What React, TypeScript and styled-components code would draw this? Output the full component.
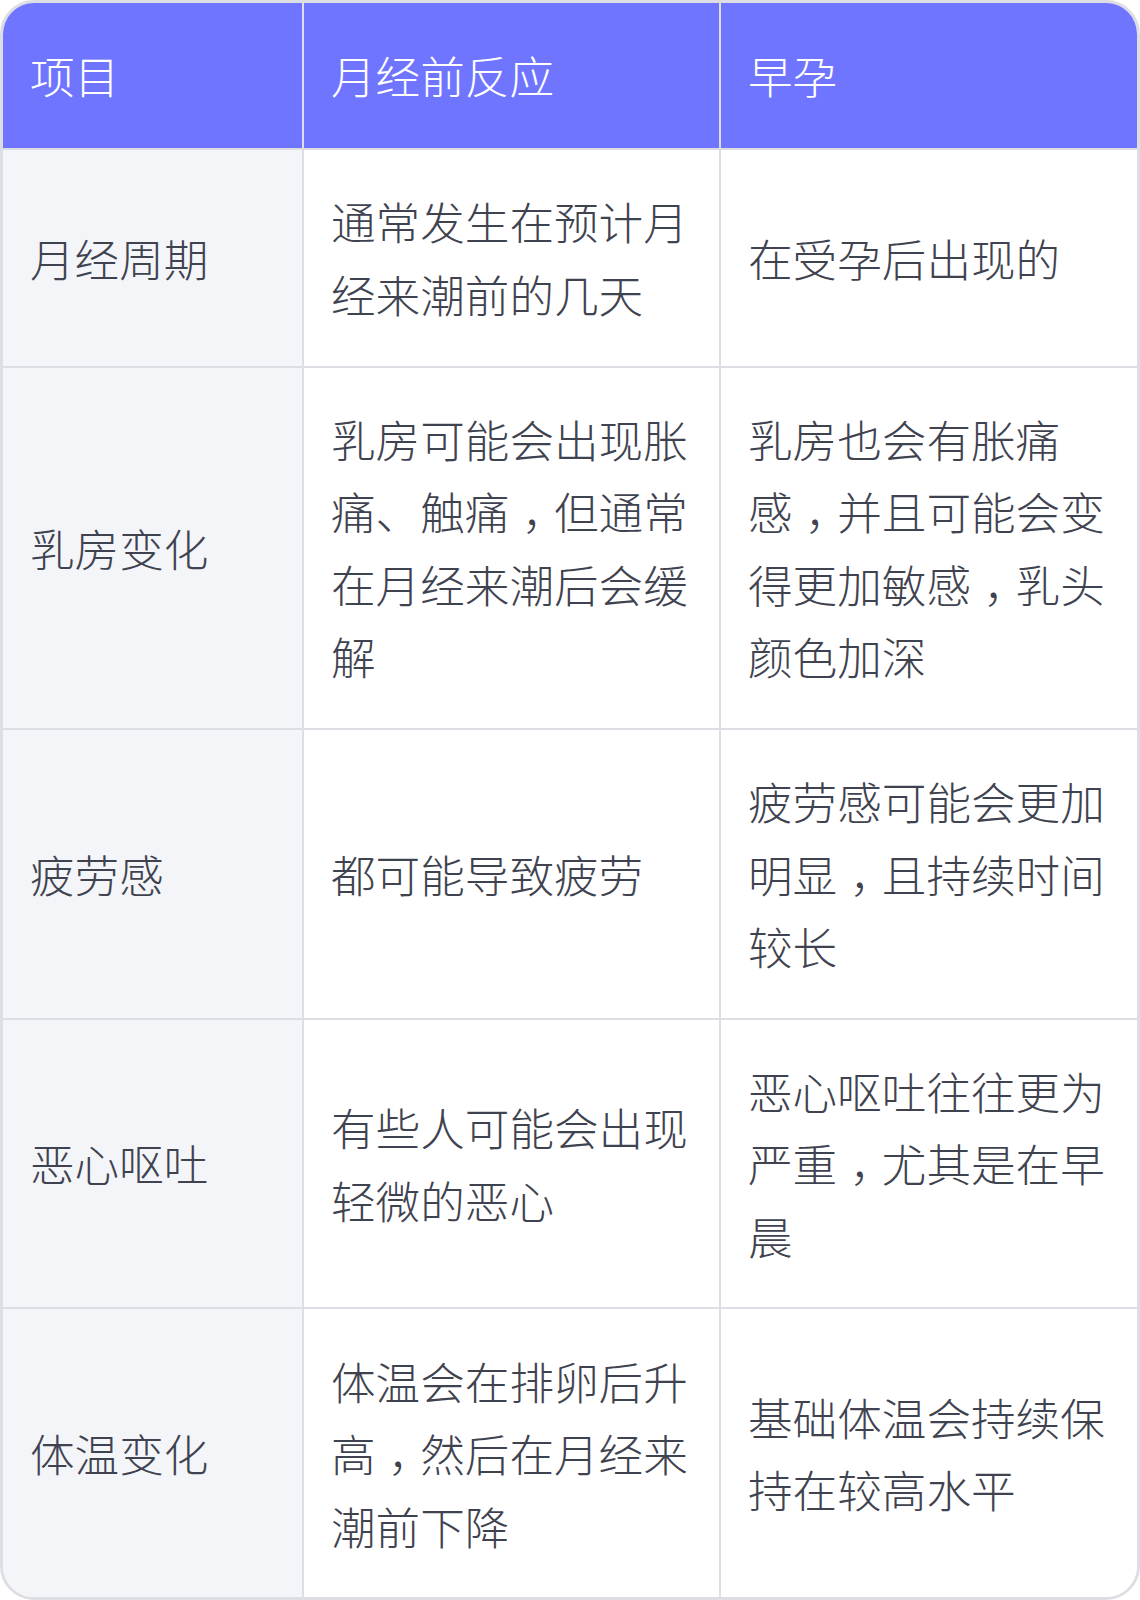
import { Fragment } from 'react';
import styled, { createGlobalStyle } from 'styled-components';

const GlobalStyle = createGlobalStyle`
  html, body {
    margin: 0;
    padding: 0;
    background: #ffffff;
  }
  body {
    font-family: 'Noto Sans CJK SC', 'Noto Sans', sans-serif;
  }
`;

const TableFrame = styled.div`
  width: 1140px;
  box-sizing: border-box;
  border: 3px solid #dddee3;
  border-radius: 34px;
  overflow: hidden;
  background: #ffffff;
`;

const StyledTable = styled.table`
  width: 100%;
  border-collapse: collapse;
  table-layout: fixed;
  font-size: 44.6px;
  font-weight: 300;
  line-height: 72.4px;
  color: #3f4350;
`;

const HeadCell = styled.th`
  background: #7075ff;
  color: #ffffff;
  font-weight: 300;
  text-align: left;
  padding: 36.4px 29px 36.4px 27px;
  border-left: 2px solid #dddee3;
  border-bottom: 2px solid #dddee3;
  vertical-align: middle;

  &:first-child {
    border-left: none;
  }
`;

const Cell = styled.td<{ $label?: boolean }>`
  background: ${(p) => (p.$label ? '#f4f5f9' : '#ffffff')};
  padding: 35.3px 29px 35.3px 27px;
  border-left: 2px solid #dddee3;
  border-bottom: 2px solid #dddee3;
  vertical-align: middle;
  word-break: break-all;

  &:first-child {
    border-left: none;
  }
`;

// full-width comma sits centred in its box in the reference
const Punct = styled.span`
  position: relative;
  left: 0.28em;
`;

const Row = styled.tr`
  &:last-child td {
    border-bottom: none;
  }
`;

const rows = [
  ['月经周期', '通常发生在预计月经来潮前的几天', '在受孕后出现的'],
  [
    '乳房变化',
    '乳房可能会出现胀痛、触痛，但通常在月经来潮后会缓解',
    '乳房也会有胀痛感，并且可能会变得更加敏感，乳头颜色加深',
  ],
  ['疲劳感', '都可能导致疲劳', '疲劳感可能会更加明显，且持续时间较长'],
  ['恶心呕吐', '有些人可能会出现轻微的恶心', '恶心呕吐往往更为严重，尤其是在早晨'],
  ['体温变化', '体温会在排卵后升高，然后在月经来潮前下降', '基础体温会持续保持在较高水平'],
];

function Text({ children }: { children: string }) {
  const parts = children.split('，');
  return (
    <>
      {parts.map((p, i) => (
        <Fragment key={i}>
          {p}
          {i < parts.length - 1 && <Punct>，</Punct>}
        </Fragment>
      ))}
    </>
  );
}

function App() {
  return (
    <>
      <GlobalStyle />
      <TableFrame>
        <StyledTable>
          <colgroup>
            <col style={{ width: 300 }} />
            <col style={{ width: 417 }} />
            <col style={{ width: 417 }} />
          </colgroup>
          <thead>
            <tr>
              <HeadCell>项目</HeadCell>
              <HeadCell>月经前反应</HeadCell>
              <HeadCell>早孕</HeadCell>
            </tr>
          </thead>
          <tbody>
            {rows.map((r) => (
              <Row key={r[0]}>
                <Cell $label>{r[0]}</Cell>
                <Cell>
                  <Text>{r[1]}</Text>
                </Cell>
                <Cell>
                  <Text>{r[2]}</Text>
                </Cell>
              </Row>
            ))}
          </tbody>
        </StyledTable>
      </TableFrame>
    </>
  );
}

export default App;
